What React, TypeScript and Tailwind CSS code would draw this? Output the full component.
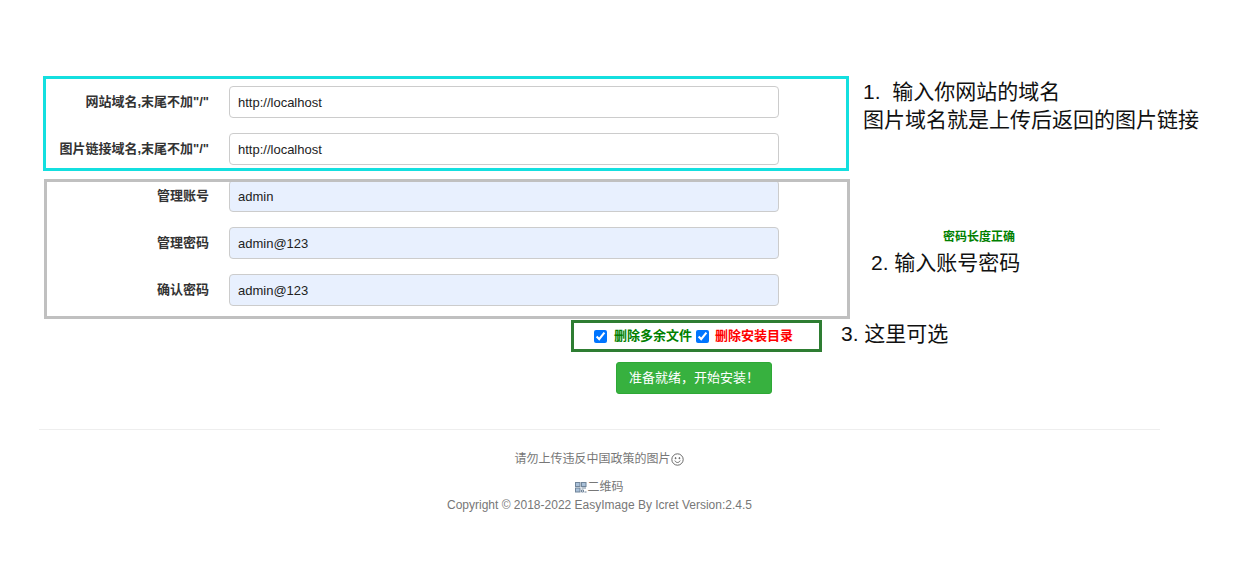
const fontStack = '"Liberation Sans","Noto Sans CJK SC",sans-serif';

function Row({ label, value, filled }: { label: string; value: string; filled?: boolean }) {
  return (
    <div className="flex items-center h-[32px] mb-[15px]">
      <label className="w-[170px] text-right text-[13px] font-bold text-[#333] -mt-[1px]">{label}</label>
      <input
        readOnly
        value={value}
        className={`ml-[20px] w-[550px] h-[32px] px-[8px] text-[13px] text-[#222] rounded-[4px] border border-[#ccc] outline-none ${filled ? "bg-[#e8f0fe]" : "bg-white"}`}
      />
    </div>
  );
}

export default function App() {
  return (
    <div className="relative w-[1243px] h-[577px] overflow-hidden bg-white" style={{ fontFamily: fontStack }}>
      <main className="ml-[39px] w-[1121px] pt-[86px]">
        <Row label="网站域名,末尾不加&quot;/&quot;" value="http://localhost" />
        <Row label="图片链接域名,末尾不加&quot;/&quot;" value="http://localhost" />
        <Row label="管理账号" value="admin" filled />
        <Row label="管理密码" value="admin@123" filled />
        <Row label="确认密码" value="admin@123" filled />
        <div className="flex items-center h-[20px] mt-[5px] ml-[555px] text-[13px] font-bold pt-[10px]">
          <input type="checkbox" defaultChecked className="w-[13px] h-[13px] m-0" />
          <span className="ml-[7px] text-[#008000]">删除多余文件</span>
          <input type="checkbox" defaultChecked className="w-[13px] h-[13px] m-0 ml-[4px]" />
          <span className="ml-[6px] text-[#ff0000]">删除安装目录</span>
        </div>
        <div className="mt-[21px] ml-[577px]">
          <button className="w-[156px] h-[32px] rounded-[3px] border border-[#2ea836] bg-[#37b13f] text-white text-[13px] font-normal">
            准备就绪，开始安装！
          </button>
        </div>
        <hr className="mt-[35px] border-t border-[#eee]" />
        <footer className="text-center text-[12px] text-[#777]">
          <div className="mt-[21px] h-[16px] flex items-center justify-center pr-[1px]">
            请勿上传违反中国政策的图片
            <svg viewBox="0 0 24 24" className="w-[13px] h-[13px]" fill="none" stroke="#666" strokeWidth="1.8">
              <circle cx="12" cy="12" r="10.5" />
              <circle cx="8.5" cy="9.5" r="1" fill="#666" />
              <circle cx="15.5" cy="9.5" r="1" fill="#666" />
              <path d="M7 14c1.2 2.4 3 3.5 5 3.5s3.8-1.1 5-3.5" />
            </svg>
          </div>
          <div className="mt-[12px] h-[16px] flex items-center justify-center">
            <svg viewBox="0 0 12 12" className="w-[12px] h-[12px]" fill="#a9c0d8" stroke="#71859a" strokeWidth="1">
              <rect x="0.5" y="1.5" width="4.5" height="4" />
              <rect x="6.5" y="1.5" width="4.5" height="4" />
              <rect x="0.5" y="7" width="4.5" height="4" />
              <path d="M6.5 7h4.5M6.5 9h2v2h-2zM9.5 11h2" fill="none" />
            </svg>
            二维码
          </div>
          <div className="mt-[2px] h-[16px] leading-[16px]">Copyright © 2018-2022 EasyImage By Icret Version:2.4.5</div>
        </footer>
      </main>

      <div className="absolute left-[43px] top-[76px] w-[806px] h-[95px] border-[3px] border-[#14dfdf]" />
      <div className="absolute left-[44px] top-[179px] w-[806px] h-[140px] border-[3px] border-[#c0c0c0]" />
      <div className="absolute left-[571px] top-[320px] w-[251px] h-[32px] border-[3px] border-[#2e7d32]" />

      <div className="absolute left-[863px] top-[78px] text-[21px] leading-[28px] text-[#111] whitespace-pre">
        {"1.  输入你网站的域名\n图片域名就是上传后返回的图片链接"}
      </div>
      <div className="absolute left-[943px] top-[229px] text-[12px] leading-[16px] font-bold text-[#008000]">密码长度正确</div>
      <div className="absolute left-[871px] top-[249px] text-[21px] leading-[28px] text-[#111]">2. 输入账号密码</div>
      <div className="absolute left-[841px] top-[320px] text-[21px] leading-[28px] text-[#111]">3. 这里可选</div>
    </div>
  );
}
